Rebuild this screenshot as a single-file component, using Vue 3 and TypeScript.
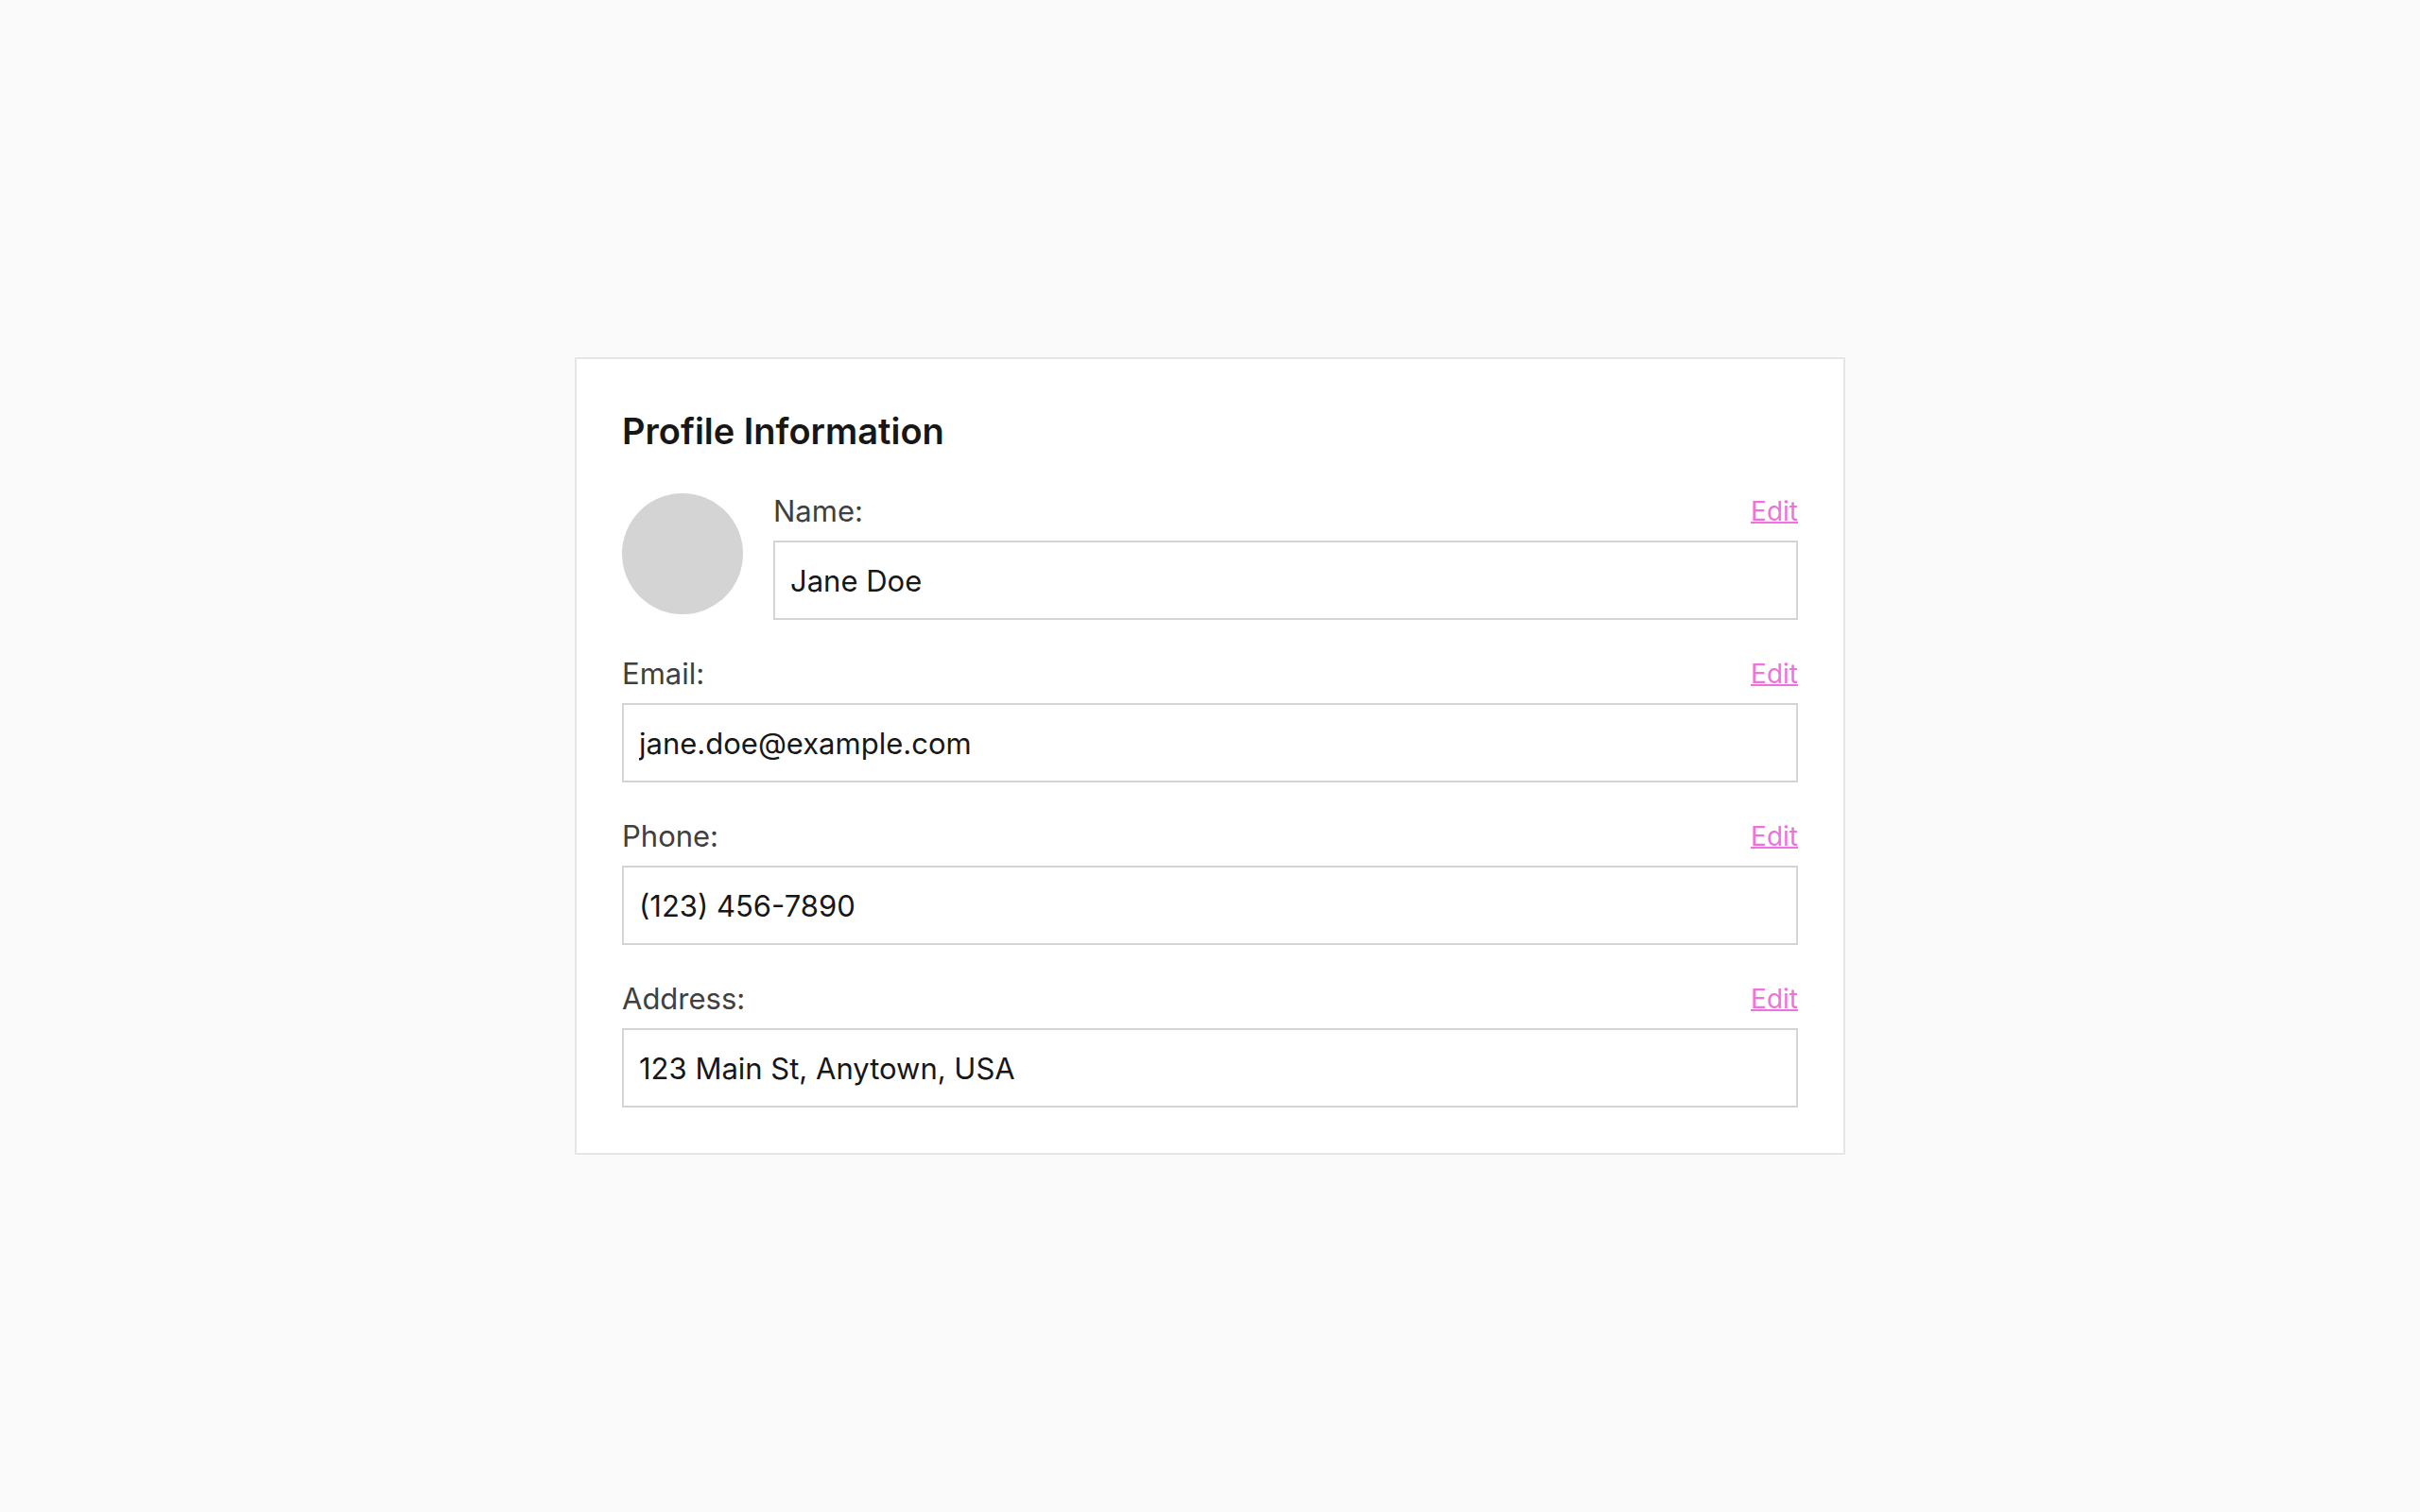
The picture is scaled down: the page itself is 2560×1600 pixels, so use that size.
<script setup lang="ts">
import { ref } from 'vue'

interface Field {
  id: string
  label: string
  value: string
  type: string
  avatar?: boolean
}

const fields = ref<Field[]>([
  { id: 'name', label: 'Name:', value: 'Jane Doe', type: 'text', avatar: true },
  { id: 'email', label: 'Email:', value: 'jane.doe@example.com', type: 'email' },
  { id: 'phone', label: 'Phone:', value: '(123) 456-7890', type: 'tel' },
  { id: 'address', label: 'Address:', value: '123 Main St, Anytown, USA', type: 'text' },
])
</script>

<template>
  <main class="page">
    <section class="card">
      <h2 class="title">Profile Information</h2>
      <div v-for="field in fields" :key="field.id" class="row">
        <div v-if="field.avatar" class="avatar"></div>
        <div class="field">
          <div class="head">
            <label class="label" :for="field.id">{{ field.label }}</label>
            <button class="edit" type="button">Edit</button>
          </div>
          <input :id="field.id" v-model="field.value" class="input" :type="field.type" />
        </div>
      </div>
    </section>
  </main>
</template>

<style>
body {
  margin: 0;
  background: #fafafa;
}
</style>

<style scoped>
.page {
  box-sizing: border-box;
  min-height: 100vh;
  padding: 32px;
  display: flex;
  align-items: center;
  justify-content: center;
  background: #fafafa;
  color: #171717;
  font-family: Inter, "Liberation Sans", sans-serif;
}

.card {
  box-sizing: border-box;
  width: 100%;
  max-width: 1344px;
  padding: 48px;
  display: flex;
  flex-direction: column;
  gap: 32px;
  background: #ffffff;
  border: 2px solid #e5e5e5;
}

.title {
  margin: 0;
  font-size: 38px;
  line-height: 56px;
  font-weight: 600;
}

.row {
  display: flex;
  align-items: center;
  gap: 32px;
}

.avatar {
  flex: none;
  width: 128px;
  height: 128px;
  border-radius: 50%;
  background: #d4d4d4;
}

.field {
  flex: 1;
  min-width: 0;
  display: flex;
  flex-direction: column;
  gap: 6px;
}

.head {
  display: flex;
  align-items: center;
  justify-content: space-between;
}

.label {
  font-size: 31px;
  line-height: 50px;
  color: #404040;
}

.edit {
  padding: 0;
  border: 0;
  background: none;
  color: #ee72dc;
  font-family: inherit;
  font-size: 28px;
  line-height: 40px;
  text-decoration: underline;
  text-decoration-thickness: 2px;
  text-decoration-skip-ink: none;
  cursor: pointer;
}

.input {
  box-sizing: border-box;
  width: 100%;
  height: 84px;
  padding: 16px;
  border: 2px solid #d4d4d4;
  border-radius: 0;
  background: #ffffff;
  color: #171717;
  font-family: inherit;
  font-size: 31px;
  line-height: 48px;
}
</style>
